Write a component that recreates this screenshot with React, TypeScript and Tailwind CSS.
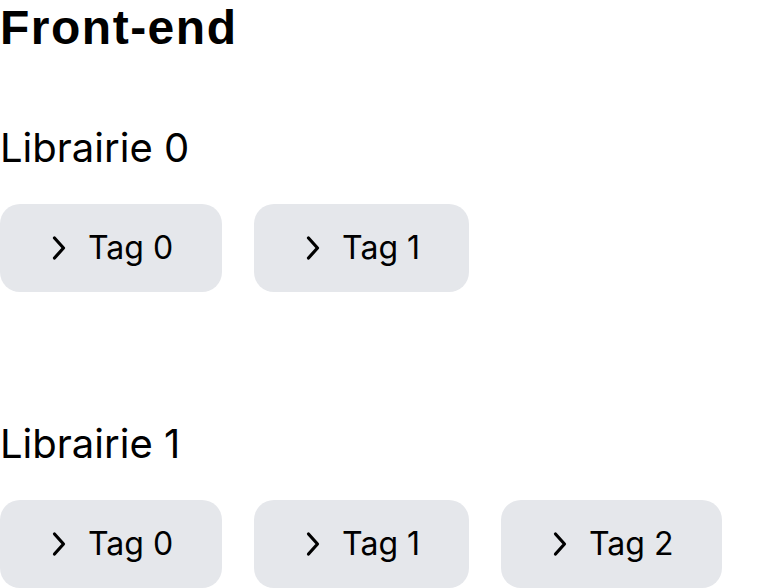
const libraries = [
  { name: "Librairie 0", tags: ["Tag 0", "Tag 1"] },
  { name: "Librairie 1", tags: ["Tag 0", "Tag 1", "Tag 2"] },
];

function Chevron() {
  return (
    <svg width="15" height="26" viewBox="0 0 15 26" fill="none" className="shrink-0">
      <path
        d="M3.5 3 L12.5 13 L3.5 23"
        stroke="currentColor"
        strokeWidth="3.2"
        strokeLinecap="round"
        strokeLinejoin="round"
      />
    </svg>
  );
}

function TagButton({ label }: { label: string }) {
  return (
    <button
      type="button"
      className="flex h-[88px] items-center gap-[22px] rounded-[20px] bg-[#e5e7eb] pl-[51px] pr-[49px] text-[32px] leading-[40px] text-black"
    >
      <Chevron />
      <span>{label}</span>
    </button>
  );
}

export default function App() {
  return (
    <div className="min-h-screen bg-white font-['Inter',sans-serif] text-black">
      <h1 className="font-['Liberation_Sans',Arial,sans-serif] text-[48px] font-bold leading-[56px] tracking-[1.5px]">
        Front-end
      </h1>

      <div className="mt-[72px] flex flex-col gap-[132px]">
        {libraries.map((lib) => (
          <section key={lib.name} className="flex flex-col gap-[36px]">
            <h2 className="text-[40px] leading-[40px] font-normal">{lib.name}</h2>
            <div className="flex gap-[32px]">
              {lib.tags.map((tag) => (
                <TagButton key={tag} label={tag} />
              ))}
            </div>
          </section>
        ))}
      </div>
    </div>
  );
}
